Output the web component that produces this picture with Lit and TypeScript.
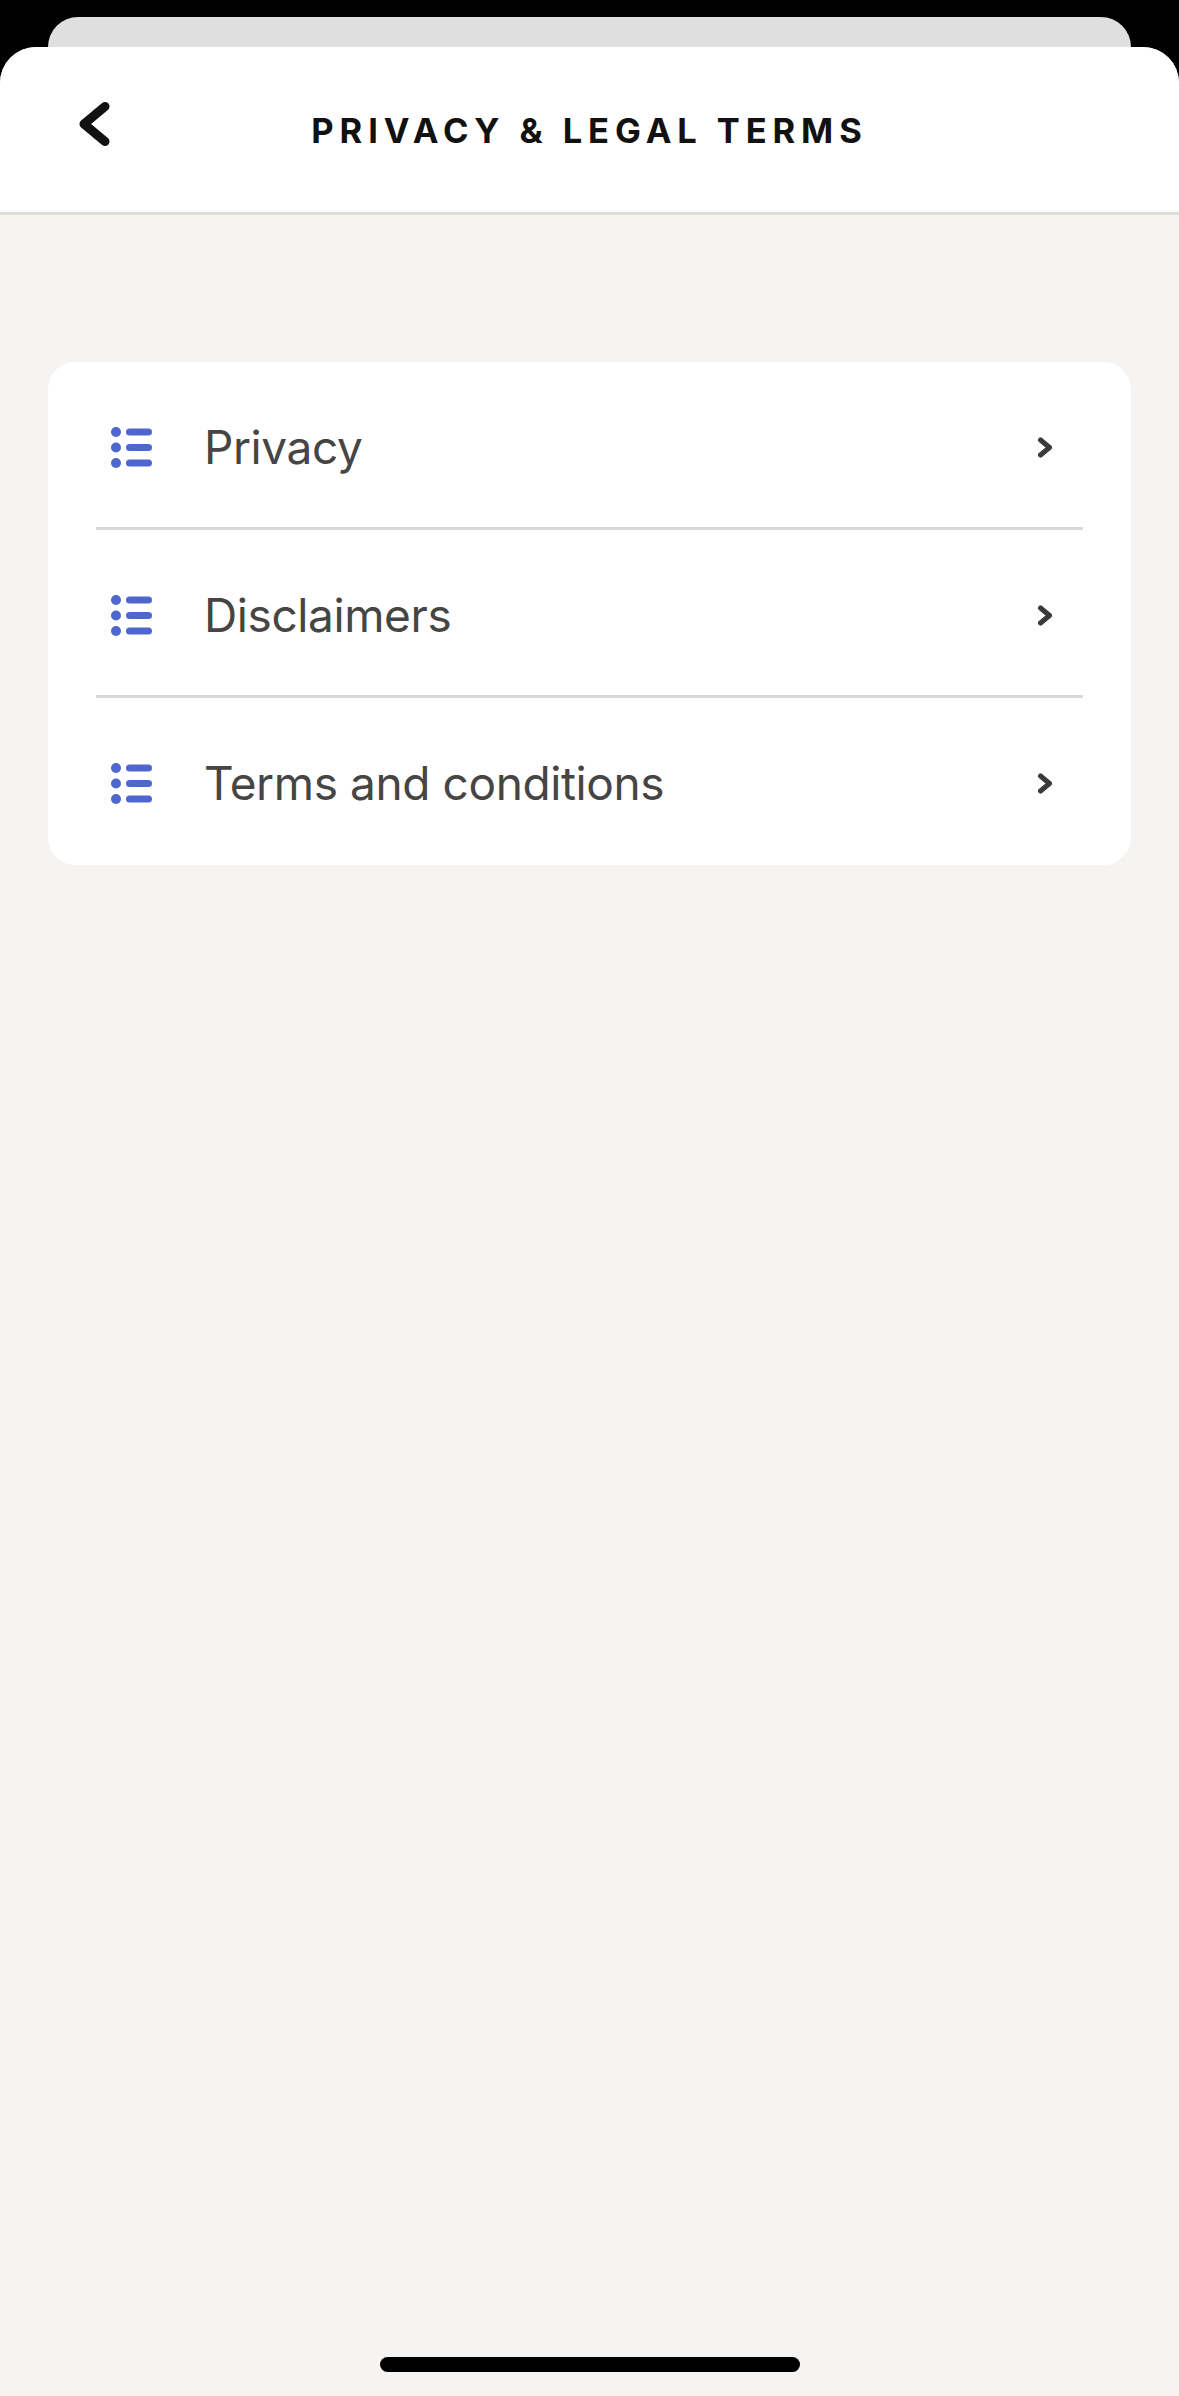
import { LitElement, html, css } from "lit";
import { customElement } from "lit/decorators.js";

const ITEMS = ["Privacy", "Disclaimers", "Terms and conditions"];

const listIcon = html`<svg class="list-icon" viewBox="0 0 41 41" aria-hidden="true">
  <circle cx="5" cy="5" r="5"></circle>
  <circle cx="5" cy="20.5" r="5"></circle>
  <circle cx="5" cy="36" r="5"></circle>
  <rect x="15" y="1.5" width="26" height="7" rx="3.5"></rect>
  <rect x="15" y="17" width="26" height="7" rx="3.5"></rect>
  <rect x="15" y="32.5" width="26" height="7" rx="3.5"></rect>
</svg>`;

@customElement("app-root")
export class AppRoot extends LitElement {
  static styles = css`
    :host {
      display: block;
      background: #000;
      height: 2396px;
      padding-top: 17px;
      box-sizing: border-box;
      font-family: Inter, "Liberation Sans", sans-serif;
      overflow: hidden;
    }
    .peek {
      height: 30px;
      margin: 0 48px;
      background: #dfdfdf;
      border-radius: 30px 30px 0 0;
    }
    .sheet {
      height: 2349px;
      display: flex;
      flex-direction: column;
      background: #f5f4f2;
      border-radius: 36px 36px 0 0;
      overflow: hidden;
    }
    .header {
      height: 165px;
      flex: none;
      display: grid;
      grid-template-columns: 1fr auto 1fr;
      align-items: start;
      background: #fff;
      border-bottom: 3px solid #dfded9;
    }
    .back {
      width: 40px;
      height: 54px;
      margin: 50px 0 0 74px;
      fill: none;
      stroke: #111;
      stroke-width: 9;
      stroke-linecap: round;
      stroke-linejoin: round;
    }
    .title {
      margin-top: 62px;
      font-size: 34.5px;
      line-height: 44px;
      font-weight: 700;
      letter-spacing: 5.9px;
      color: #111;
      white-space: nowrap;
    }
    .content {
      flex: 1;
      display: flex;
      flex-direction: column;
      padding: 147px 48px 0;
    }
    .card {
      background: #fff;
      border-radius: 27px;
      padding-bottom: 2px;
    }
    .row {
      height: 165px;
      box-sizing: border-box;
      padding: 6px 79px 0 63px;
      display: flex;
      align-items: center;
    }
    .list-icon {
      width: 41px;
      height: 41px;
      flex: none;
      fill: #4f67cc;
    }
    .label {
      flex: 1;
      margin: 0 0 2px 52px;
      font-size: 46px;
      font-weight: 400;
      letter-spacing: -0.4px;
      color: #464544;
    }
    .chev {
      width: 14px;
      height: 21px;
      flex: none;
      fill: none;
      stroke: #3a3a3a;
      stroke-width: 5;
      stroke-linecap: round;
      stroke-linejoin: round;
    }
    .divider {
      height: 3px;
      margin: 0 48px;
      background: #d9d9d9;
    }
    .home {
      margin: auto auto 24px;
      width: 420px;
      height: 15px;
      border-radius: 8px;
      background: #000;
    }
  `;

  render() {
    return html`
      <div class="peek"></div>
      <div class="sheet">
        <header class="header">
          <svg class="back" viewBox="0 0 40 54" aria-hidden="true">
            <path d="M31 9.5 L10 27 L31 44.5"></path>
          </svg>
          <div class="title">PRIVACY &amp; LEGAL TERMS</div>
        </header>
        <main class="content">
          <section class="card">
            ${ITEMS.map(
              (item, i) => html`
                ${i > 0 ? html`<div class="divider"></div>` : ""}
                <div class="row">
                  ${listIcon}
                  <span class="label">${item}</span>
                  <svg class="chev" viewBox="0 0 14 21" aria-hidden="true">
                    <path d="M2.5 3 L11.5 10.5 L2.5 18"></path>
                  </svg>
                </div>
              `
            )}
          </section>
          <div class="home"></div>
        </main>
      </div>
    `;
  }
}
